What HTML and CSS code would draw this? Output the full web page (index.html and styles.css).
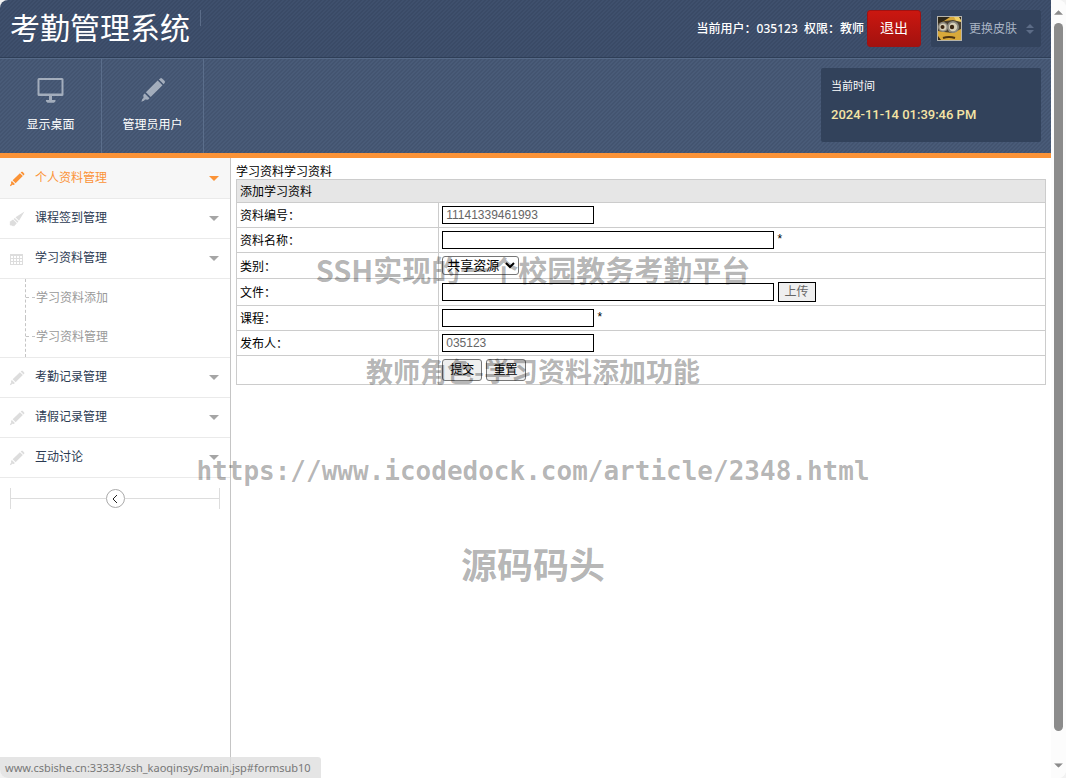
FILE: index.html
```html
<!DOCTYPE html>
<html lang="zh-CN">
<head>
<meta charset="utf-8">
<title>考勤管理系统</title>
<link rel="stylesheet" href="styles.css">
</head>
<body>
<svg class="defs" aria-hidden="true">
  <symbol id="pencil" viewBox="0 0 26 26">
    <path d="M20.5 1.2a2 2 0 0 1 1.6.2l2.600 2.500a2 2 0 0 1 .2 1.700l-1.200 1.600-4.800-4.800zM17.700 3.500l4.800 4.800L10.700 20l-4.800-4.800zM4.700 16.400l4.800 4.800-1.500 1.500-3-.2-1 1.300-2.600 1 .9-2.700 1.200-1-.2-3.200z"/>
  </symbol>
  <symbol id="caret" viewBox="0 0 10 5"><path d="M0 0h10L5 5z"/></symbol>
</svg>
<div class="window">
  <div class="page">
    <header class="top">
      <h1 class="brand">考勤管理系统</h1>
      <div class="account">
        <span class="user">当前用户：035123&nbsp; 权限：教师</span>
        <button class="logout" type="button">退出</button>
        <button class="skin" type="button">
          <svg class="avatar" viewBox="0 0 25 25" aria-hidden="true">
            <rect width="25" height="25" fill="#b5b3ab"/>
            <rect x="1" y="1" width="23" height="23" fill="#33291c"/>
            <path d="M4 1h14l6 5v18H4l-3-4V7z" fill="#d9a93a"/>
            <path d="M17 1h5l2 3v10z" fill="#f0cf67"/>
            <path d="M1 1h12L7 5 1 8z" fill="#2e2718"/>
            <path d="M1 7l7-2 8-1 8 2v7l-8 4-9-1-6-1z" fill="#4a4030"/>
            <circle cx="6" cy="11" r="5" fill="#8d8a80"/>
            <circle cx="16" cy="11" r="6" fill="#8d8a80"/>
            <circle cx="6" cy="11" r="3.500" fill="#d8d0b8"/>
            <circle cx="16" cy="11" r="4.200" fill="#d8d0b8"/>
            <circle cx="5.500" cy="11" r="2" fill="#3a2613"/>
            <circle cx="15" cy="11" r="2.200" fill="#3a2613"/>
            <path d="M6 22q6-2 12 0" stroke="#4c3210" stroke-width="2" fill="none"/>
          </svg>
          <span>更换皮肤</span>
          <svg class="updown" viewBox="0 0 8 10" aria-hidden="true"><path d="M0 4l4-4 4 4zM0 6h8l-4 4z"/></svg>
        </button>
      </div>
    </header>
    <nav class="tools">
      <a class="tool" href="#desktop">
        <svg viewBox="0 0 28 26" aria-hidden="true">
          <path fill-rule="evenodd" d="M2 1h23a1.500 1.500 0 0 1 1.500 1.500v15A1.500 1.500 0 0 1 25 19H2a1.500 1.500 0 0 1-1.500-1.500v-15A1.500 1.500 0 0 1 2 1zm.5 2v13.500h22V3z"/>
          <path d="M12 19h3v4h-3zM9 23h9.500v1.200l-1.500 1.500h-6.500L9 24.200z"/>
        </svg>
        <span>显示桌面</span>
      </a>
      <a class="tool" href="#users">
        <svg viewBox="0 0 26 26" aria-hidden="true"><use href="#pencil"/></svg>
        <span>管理员用户</span>
      </a>
      <section class="clock">
        <h2>当前时间</h2>
        <time datetime="2024-11-14T13:39:46">2024-11-14 01:39:46 PM</time>
      </section>
    </nav>
    <div class="body">
      <aside class="sidebar">
        <ul class="menu">
          <li><a class="entry active" href="#m1"><svg class="icon" viewBox="0 0 26 26"><use href="#pencil"/></svg><span>个人资料管理</span><svg class="caret" viewBox="0 0 10 5"><use href="#caret"/></svg></a></li>
          <li><a class="entry" href="#m2"><svg class="icon" viewBox="0 0 16 16"><path d="M15.500.5L10 9.800 6.500 6.300zM5.800 6.900l3.600 3.600-1 1.200-3.800-3.800zM4 8.500l3.800 3.800-2.900 3.200-.9-.9-.6.6-1-1-.6.5L.5 13l.8-1-.8-.9z"/></svg><span>课程签到管理</span><svg class="caret" viewBox="0 0 10 5"><use href="#caret"/></svg></a></li>
          <li>
            <a class="entry" href="#m3"><svg class="icon" viewBox="0 0 16 16"><path fill-rule="evenodd" d="M1 3h13v11H1zM2 5v2h2V5zm3 0v2h2V5zm3 0v2h2V5zm3 0v2h2V5zM2 8v2h2V8zm3 0v2h2V8zm3 0v2h2V8zm3 0v2h2V8zM2 11v2h2v-2zm3 0v2h2v-2zm3 0v2h2v-2zm3 0v2h2v-2z"/></svg><span>学习资料管理</span><svg class="caret" viewBox="0 0 10 5"><use href="#caret"/></svg></a>
            <ul class="submenu">
              <li><a href="#formsub10">学习资料添加</a></li>
              <li><a href="#formsub11">学习资料管理</a></li>
            </ul>
          </li>
          <li><a class="entry" href="#m4"><svg class="icon" viewBox="0 0 26 26"><use href="#pencil"/></svg><span>考勤记录管理</span><svg class="caret" viewBox="0 0 10 5"><use href="#caret"/></svg></a></li>
          <li><a class="entry" href="#m5"><svg class="icon" viewBox="0 0 26 26"><use href="#pencil"/></svg><span>请假记录管理</span><svg class="caret" viewBox="0 0 10 5"><use href="#caret"/></svg></a></li>
          <li><a class="entry" href="#m6"><svg class="icon" viewBox="0 0 26 26"><use href="#pencil"/></svg><span>互动讨论</span><svg class="caret" viewBox="0 0 10 5"><use href="#caret"/></svg></a></li>
        </ul>
        <div class="collapse">
          <i></i>
          <button type="button" aria-label="收起菜单"><svg viewBox="0 0 8 8" aria-hidden="true"><path d="M6 0L2 4l4 4"/></svg></button>
          <i></i>
        </div>
      </aside>
      <main class="content">
        <p class="crumb">学习资料学习资料</p>
        <form>
          <table class="form">
            <tr class="head"><td colspan="2">添加学习资料</td></tr>
            <tr><td><label for="no">资料编号：</label></td><td><input id="no" class="short" type="text" value="11141339461993"></td></tr>
            <tr><td><label for="name">资料名称：</label></td><td><input id="name" class="long" type="text"> *</td></tr>
            <tr class="r26"><td><label for="kind">类别：</label></td><td><select id="kind"><option>共享资源</option></select></td></tr>
            <tr class="r27"><td><label for="file">文件：</label></td><td><input id="file" class="long" type="text"> <button class="upload" type="button">上传</button></td></tr>
            <tr><td><label for="course">课程：</label></td><td><input id="course" class="short" type="text"> *</td></tr>
            <tr><td><label for="author">发布人：</label></td><td><input id="author" class="short" type="text" value="035123"></td></tr>
            <tr class="r29"><td></td><td><button class="plain" type="button">提交</button> <button class="plain" type="reset">重置</button></td></tr>
          </table>
        </form>
      </main>
    </div>
  </div>
  <div class="scrollbar" aria-hidden="true">
    <svg viewBox="0 0 10 5"><path d="M0 5h10L5 0z"/></svg>
    <div class="track"><div class="thumb"></div></div>
    <svg viewBox="0 0 10 5"><use href="#caret"/></svg>
  </div>
  <div class="status">www.csbishe.cn:33333/ssh_kaoqinsys/main.jsp#formsub10</div>
  <div class="marks">
    <p class="title">SSH实现的一个校园教务考勤平台</p>
    <p class="feature">教师角色-学习资料添加功能</p>
    <p class="url">https://www.icodedock.com/article/2348.html</p>
    <p class="site">源码码头</p>
  </div>
</div>
</body>
</html>
```
FILE: styles.css
```css
* { box-sizing: border-box; }

body {
  margin: 0;
  background: #f2f2f2;
  color: #000;
  font: 12px/16px "Liberation Sans", "Noto Sans CJK SC", sans-serif;
}

h1, h2, p, ul { margin: 0; padding: 0; font-weight: 400; }
ul { list-style: none; }
a { color: inherit; text-decoration: none; }
button, input, select { font: inherit; color: inherit; }
.defs { display: none; }

.window {
  position: relative;
  display: flex;
  min-height: 100vh;
  overflow: hidden;
  border-radius: 8px;
  background: #fff;
}

.page { flex: 1; display: flex; flex-direction: column; }

/* header */
.top, .tools {
  background-clip: padding-box;
  background-image: linear-gradient(135deg, rgba(0, 0, 0, .05) 25%, rgba(255, 255, 255, .01) 25% 50%, rgba(0, 0, 0, .05) 50% 75%, rgba(255, 255, 255, .01) 75%);
  background-size: 4px 4px;
}

.top {
  display: flex;
  justify-content: space-between;
  height: 58px;
  padding: 10px;
  border-bottom: 1px solid #2e3e57;
  background-color: #3d4e6b;
}

.brand {
  height: 16px;
  padding-right: 10px;
  border-right: 1px solid #5b6c88;
  color: #fff;
  font-family: "Noto Sans CJK SC", sans-serif;
  font-size: 30px;
  line-height: 32px;
}

.account { display: flex; align-items: center; }
.user { color: #fff; font: 500 12px/16px "Noto Sans", "Noto Sans CJK SC", sans-serif; }

.logout {
  width: 54px;
  height: 37px;
  margin: 0 10px 0 3px;
  padding: 0 0 2px;
  border: 1px solid #a01212;
  border-radius: 3px;
  background: linear-gradient(#cb1710, #a3120f);
  color: #fff;
  font-size: 14px;
}

.skin {
  display: flex;
  align-items: center;
  width: 110px;
  height: 37px;
  padding: 0 6px 0 5px;
  border: 1px solid #33435d;
  border-radius: 2px;
  background: #33435d;
  color: #a9b4c4;
}
.avatar { width: 25px; height: 25px; margin-right: 7px; }
.updown { width: 8px; height: 10px; margin-left: auto; fill: #5c6c87; }

.tools {
  display: flex;
  height: 100px;
  border-top: 1px solid #566987;
  border-bottom: 5px solid #fb9337;
  background-color: #475976;
}

.tool {
  display: flex;
  flex-direction: column;
  align-items: center;
  width: 102px;
  padding-top: 18px;
  border-right: 1px solid #5b6e8b;
  color: #fff;
}
.tool svg { width: 28px; height: 26px; margin-bottom: 14px; fill: #a3adbc; }

.clock {
  width: 220px;
  height: 74px;
  margin: 9px 10px 0 auto;
  padding: 10px;
  border-radius: 2px;
  background: #32425b;
}
.clock h2 { margin-bottom: 13px; color: #fff; font-size: 11px; line-height: 16px; }
.clock time { display: block; color: #f5e5a5; font: 500 13px/16px Roboto, sans-serif; }

/* sidebar */
.body { flex: 1; display: flex; }

.sidebar {
  width: 231px;
  border-right: 1px solid #c5c5c5;
}

.menu { border-top: 1px solid #f7f7f7; }

.entry {
  display: flex;
  align-items: center;
  height: 40px;
  padding: 0 11px 0 9px;
  border-bottom: 1px solid #eaeaea;
  color: #2b3a52;
}
.entry span { padding-bottom: 2px; }
.entry.active { background: #f7f7f7; color: #fb9337; }
.icon { width: 16px; height: 16px; margin-right: 10px; fill: #ddd; }
.active .icon, .active .caret { fill: #fb9337; }
.caret { width: 10px; height: 5px; margin-left: auto; fill: #a5a5a5; }

.submenu { padding-left: 25px; border-bottom: 1px solid #eaeaea; }
.submenu a {
  display: flex;
  align-items: center;
  height: 39px;
  padding-bottom: 2px;
  border-left: 1px dashed #c5c5c5;
  color: #999;
}
.submenu a::before {
  content: "";
  width: 9px;
  margin-right: 1px;
  border-top: 1px dashed #c5c5c5;
}

.collapse { display: flex; align-items: center; height: 21px; margin: 10px 10px 0; border: solid #ddd; border-width: 0 1px; }
.collapse i { flex: 1; border-top: 1px solid #ddd; }
.collapse button {
  display: grid;
  place-items: center;
  width: 19px;
  height: 19px;
  padding: 0;
  border: 1px solid #aaa;
  border-radius: 50%;
  background: #fff;
}
.collapse svg { width: 8px; height: 8px; fill: none; stroke: #222; }

/* form */
.content { flex: 1; padding: 5px; }
.crumb { height: 16px; line-height: 18px; }

.form { width: 100%; border-collapse: collapse; }
.form td { height: 25px; padding: 0 3px; border: 1px solid #ccc; }
.form td:first-child { width: 25%; padding: 2px 3px 0; }
.form .head td { height: 23px; background: #e6e6e6; }
.form .r26 td { height: 26px; }
.form .r27 td { height: 27px; }
.form .r29 td { height: 29px; }

.form input {
  height: 18px;
  padding: 0 3px;
  border: 1px solid #000;
  background: #fff;
  color: #666;
  vertical-align: middle;
}
.short { width: 152px; }
.long { width: 332px; }

.form select {
  width: 77px;
  height: 19px;
  padding: 0;
  border: 1px solid #767676;
  border-radius: 3px;
  background: #fff;
  font-size: 13px;
  vertical-align: middle;
}

.upload {
  width: 38px;
  height: 20px;
  padding: 0;
  border: 1px solid #000;
  background: #efefef;
  color: #666;
  vertical-align: middle;
}

.plain {
  width: 40px;
  height: 22px;
  padding: 0;
  border: 1px solid #767676;
  border-radius: 3px;
  background: #efefef;
  vertical-align: middle;
}

/* window chrome */
.scrollbar {
  display: flex;
  flex-direction: column;
  align-items: center;
  width: 15px;
  padding: 10px 0;
  background: #fcfcfc;
}
.scrollbar svg { width: 9px; height: 5px; fill: #8b8b8b; }
.track { flex: 1; width: 9px; padding: 8px 0 32px; }
.thumb { height: 100%; border-radius: 5px; background: #8b8b8b; }

.status {
  position: absolute;
  left: 0;
  bottom: 0;
  padding: 3px 10px 2px 5px;
  border-top-right-radius: 3px;
  background: rgba(222, 222, 222, .8);
  color: #777;
  font-family: "Noto Sans", sans-serif;
  font-size: 11px;
}

.marks {
  position: absolute;
  inset: 0;
  padding-top: 244px;
  color: rgba(0, 0, 0, .3);
  font-family: "Noto Sans CJK SC", sans-serif;
  line-height: 50px;
  text-align: center;
  pointer-events: none;
}
.marks p { margin-bottom: 50px; font-weight: 700; }
.marks .title { margin-bottom: 52px; font-size: 29px; }
.feature { font-size: 27px; }
.marks .url { margin-bottom: 42px; font-family: "DejaVu Sans Mono", monospace; font-size: 26px; }
.site { font-size: 36px; }
```
